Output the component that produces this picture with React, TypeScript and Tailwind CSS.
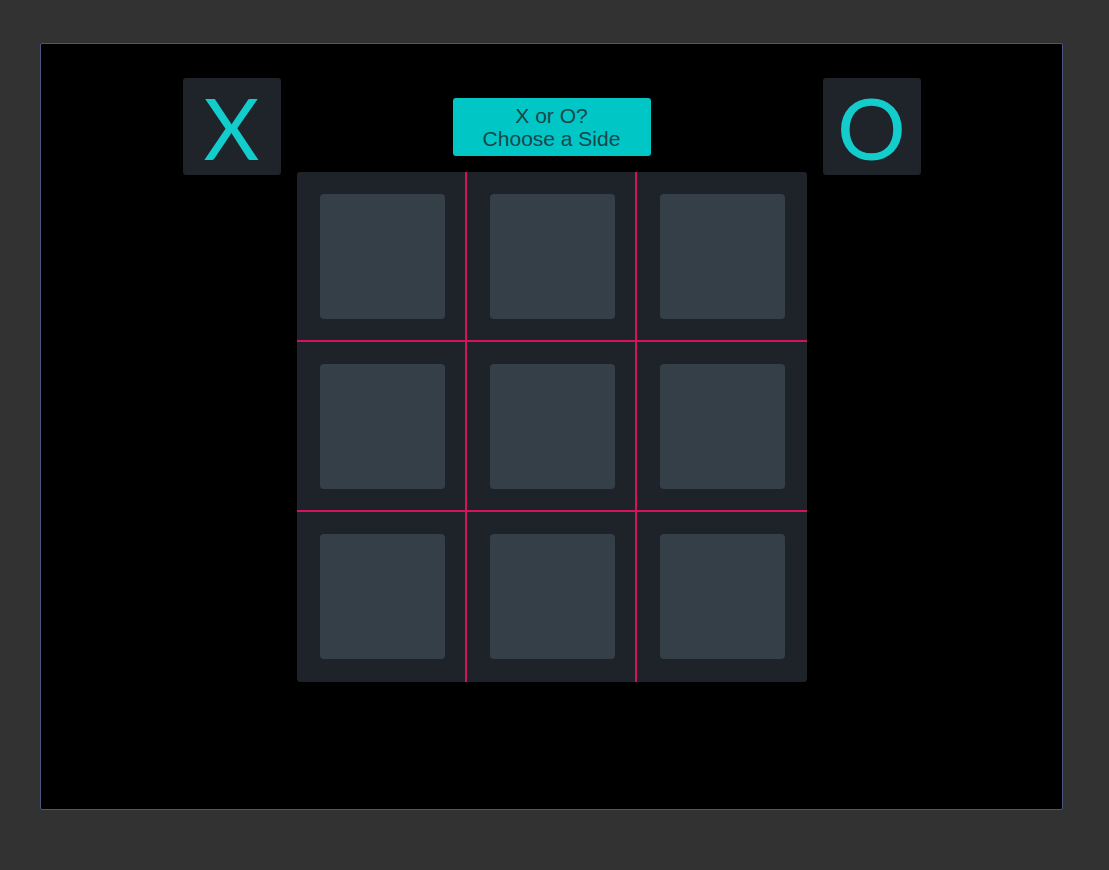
export default function App() {
  const cells = Array.from({ length: 9 }, (_, i) => i);

  return (
    <div className="min-h-[870px] w-full bg-[#323232] pl-10 pt-[43px]">
      <div className="w-[1023px] h-[767px] bg-black border border-[#4a5680] rounded-[2px] flex flex-col items-center pt-[34px]">
        <div className="flex flex-row items-center gap-[172px]">
          <div className="w-[98px] h-[97px] rounded-[3px] bg-[#1f242b] flex items-center justify-center text-[#13cccc] text-[86px] leading-none font-['Lato',sans-serif] font-normal">
            X
          </div>
          <button className="w-[198px] h-[58px] rounded-[3px] bg-[#00c6c6] text-[#18474b] text-[21px] leading-[23px] font-['Liberation_Sans',Arial,sans-serif]">
            X or O?
            <br />
            Choose a Side
          </button>
          <div className="w-[98px] h-[97px] rounded-[3px] bg-[#1f242b] flex items-center justify-center text-[#13cccc] text-[86px] leading-none font-['Lato',sans-serif] font-normal">
            O
          </div>
        </div>

        <div className="-mt-[3px] w-[510px] h-[510px] bg-[#1e2329] rounded-[3px] grid grid-cols-3 grid-rows-3 overflow-hidden">
          {cells.map((i) => (
            <div
              key={i}
              className={
                'pl-[23px] pt-[22px] ' +
                (i % 3 !== 2 ? 'border-r-2 border-r-[#d6135a] ' : '') +
                (i < 6 ? 'border-b-2 border-b-[#d6135a]' : '')
              }
            >
              <div className="w-[125px] h-[125px] rounded-[4px] bg-[#353f48]" />
            </div>
          ))}
        </div>
      </div>
    </div>
  );
}
